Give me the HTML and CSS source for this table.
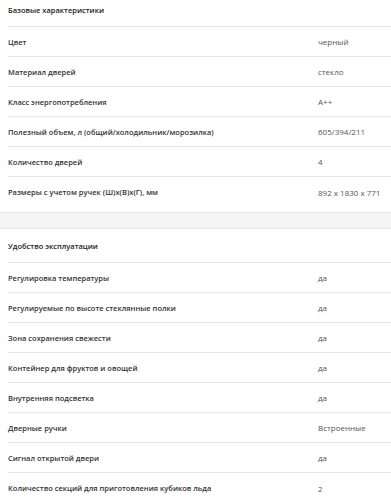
FILE: index.html
```html
<!DOCTYPE html>
<html lang="ru">
<head>
<meta charset="UTF-8">
<meta name="viewport" content="width=device-width, initial-scale=1.0">
<title>Характеристики</title>
<link rel="stylesheet" href="styles.css">
</head>
<body>

<div class="specs">
  <div class="spec-group">
    <div class="spec-title">Базовые характеристики</div>
    <div class="spec-row"><span class="spec-name">Цвет</span><span class="spec-val">черный</span></div>
    <div class="spec-row"><span class="spec-name">Материал дверей</span><span class="spec-val">стекло</span></div>
    <div class="spec-row"><span class="spec-name">Класс энергопотребления</span><span class="spec-val">A++</span></div>
    <div class="spec-row"><span class="spec-name">Полезный объем, л (общий/холодильник/морозилка)</span><span class="spec-val">605/394/211</span></div>
    <div class="spec-row"><span class="spec-name">Количество дверей</span><span class="spec-val">4</span></div>
    <div class="spec-row"><span class="spec-name">Размеры с учетом ручек (Ш)х(В)х(Г), мм</span><span class="spec-val">892 x 1830 x 771</span></div>
  </div>

  <div class="spec-gap"></div>

  <div class="spec-group">
    <div class="spec-title">Удобство эксплуатации</div>
    <div class="spec-row"><span class="spec-name">Регулировка температуры</span><span class="spec-val">да</span></div>
    <div class="spec-row"><span class="spec-name">Регулируемые по высоте стеклянные полки</span><span class="spec-val">да</span></div>
    <div class="spec-row"><span class="spec-name">Зона сохранения свежести</span><span class="spec-val">да</span></div>
    <div class="spec-row"><span class="spec-name">Контейнер для фруктов и овощей</span><span class="spec-val">да</span></div>
    <div class="spec-row"><span class="spec-name">Внутренняя подсветка</span><span class="spec-val">да</span></div>
    <div class="spec-row"><span class="spec-name">Дверные ручки</span><span class="spec-val">Встроенные</span></div>
    <div class="spec-row"><span class="spec-name">Сигнал открытой двери</span><span class="spec-val">да</span></div>
    <div class="spec-row"><span class="spec-name">Количество секций для приготовления кубиков льда</span><span class="spec-val">2</span></div>
  </div>
</div>

</body>
</html>
```

FILE: styles.css
```css
*, *::before, *::after { box-sizing: border-box; margin: 0; padding: 0; }
body {
  background: #fff;
  font-family: 'Open Sans', 'Noto Sans', sans-serif;
  font-size: 8px;
  color: #333;
  overflow: hidden;
}
.specs { margin-top: -7px; }

.spec-group { margin-left: 8px; padding-bottom: 5px; }
.spec-title {
  height: 34px;
  display: flex;
  align-items: center;
  border-bottom: 1px solid #e6e6e6;
  font-size: 7.5px;
  font-weight: 600;
  color: #222;
}
.spec-row {
  height: 30px;
  display: grid;
  grid-template-columns: 310px 1fr;
  align-items: center;
  border-bottom: 1px solid #e6e6e6;
}
.spec-row:last-child { border-bottom: none; }
.spec-name { font-size: 7.5px; font-weight: 600; color: #333; }
.spec-val { color: #555; }

.spec-gap {
  height: 17px;
  background: #f5f5f5;
  border-top: 1px solid #e6e6e6;
  border-bottom: 1px solid #e6e6e6;
}
```
